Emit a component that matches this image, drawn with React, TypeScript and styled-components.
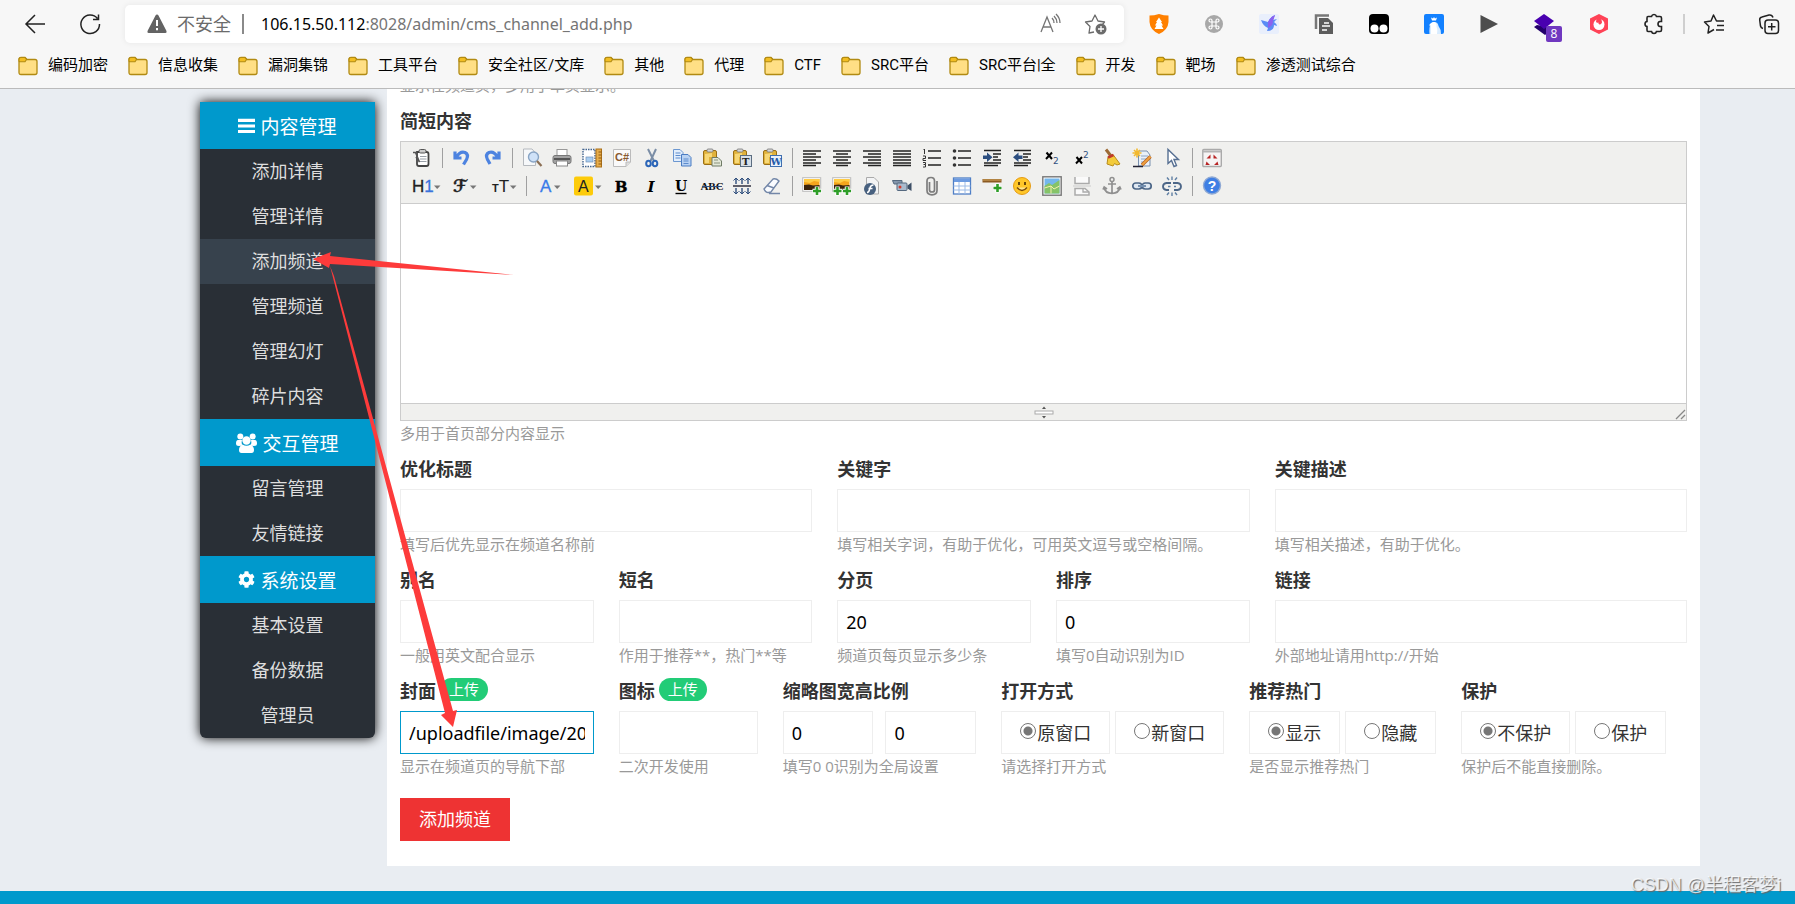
import React, { useId, useState } from 'react';
import styled, { createGlobalStyle, css } from 'styled-components';
import { FaCog } from 'react-icons/fa';

const BLUE = '#0099cc';
const SANS = '"Open Sans", "Noto Sans CJK SC", sans-serif';

const GlobalStyle = createGlobalStyle`
  *, *::before, *::after { box-sizing: border-box; }
  body {
    margin: 0;
    background: #e9edf2;
    color: #333;
    font-family: ${SANS};
    font-size: 18px;
  }
  button, input, textarea { font: inherit; }
`;

/* ---------- browser chrome ---------- */

const Page = styled.div`
  display: flex;
  flex-direction: column;
  min-height: 100vh;
  position: relative;
  overflow: hidden;
`;

const Chrome = styled.header`
  position: relative;
  z-index: 2;
  background: #f7f7f7;
  border-bottom: 1px solid #bbb;
`;

const NavBar = styled.div`
  display: flex;
  align-items: center;
  padding: 5px 16px 0 25px;
`;

const IconButton = styled.button<{ $size?: number }>`
  display: flex;
  align-items: center;
  justify-content: center;
  flex: none;
  position: relative;
  width: ${(p) => p.$size ?? 20}px;
  height: ${(p) => p.$size ?? 20}px;
  padding: 0;
  border: 0;
  background: none;
  color: inherit;
`;

const NavButtons = styled.div`
  display: flex;
  gap: 35px;
  margin-right: 25px;
  color: #222;
`;

const AddressBar = styled.div`
  flex: 1;
  display: flex;
  align-items: center;
  height: 38px;
  padding: 0 19px 0 22px;
  border-radius: 5px;
  background: #fff;
  box-shadow: 0 0 6px rgba(0, 0, 0, 0.07);
  color: #6b6b6b;
  white-space: nowrap;
`;

const Insecure = styled.span`
  margin: 0 11px 0 10px;
  font-size: 18px;
  line-height: 24px;
`;

const Divider = styled.span<{ $margin: string; $color: string }>`
  width: 2px;
  height: 20px;
  flex: none;
  margin: ${(p) => p.$margin};
  background: ${(p) => p.$color};
`;

const Url = styled.span`
  flex: 1;
  font-size: 17px;
  font-family: "Noto Sans", ${SANS};
  font-size: 16px;
  line-height: 24px;
  color: #757575;
  b { font-weight: 400; color: #000; }
`;

const AddressTools = styled.div`
  display: flex;
  gap: 25px;
`;

const Extensions = styled.div`
  display: flex;
  gap: 35px;
  margin-left: 25px;
`;

const BrowserTools = styled(Extensions)`
  margin-left: 0;
  color: #222;
`;

const Badge = styled.span`
  position: absolute;
  left: 12px;
  top: 12px;
  width: 16px;
  height: 16px;
  border-radius: 2px;
  background: #7038c0;
  color: #fff;
  font-size: 12px;
  line-height: 16px;
  text-align: center;
`;

const Bookmarks = styled.nav`
  display: flex;
  gap: 20px;
  padding: 10px 18px 10px;
`;

const Bookmark = styled.a`
  display: flex;
  align-items: center;
  gap: 10px;
  color: #000;
  font-family: Roboto, ${SANS};
  font-size: 15px;
  line-height: 25px;
  text-decoration: none;
  white-space: nowrap;
`;

/* ---------- admin page ---------- */

const Body = styled.div`
  display: flex;
  align-items: flex-start;
  gap: 12px;
  padding: 0 95px 25px 200px;
`;

const Sidebar = styled.nav`
  flex: none;
  width: 175px;
  margin-top: 13px;
  border-radius: 0 0 6px 6px;
  background: #292f36;
  box-shadow: 0 0 12px #000;
  overflow: hidden;
`;

const SidebarFrame = styled.div`
  flex: none;
`;

const GroupTitle = styled.h2`
  display: flex;
  align-items: center;
  justify-content: center;
  gap: 5px;
  height: 47px;
  margin: 0;
  background: ${BLUE};
  color: #fff;
  font-size: 19px;
  font-weight: 400;
`;

const MenuLink = styled.a<{ $active?: boolean }>`
  display: block;
  background: ${(p) => (p.$active ? '#37424d' : 'transparent')};
  color: #dedede;
  font-size: 18px;
  line-height: 45px;
  text-align: center;
  text-decoration: none;
`;

const Panel = styled.main`
  flex: 1;
  min-width: 0;
  margin-top: -16px;
  padding: 0 13px 25px;
  background: #fff;
`;

const Hint = styled.p`
  margin: 0 0 4px;
  color: #999;
  font-size: 15px;
  line-height: 24px;
  white-space: nowrap;
`;

const FieldHead = styled.div`
  display: flex;
  align-items: center;
  gap: 4px;
  height: 40px;
  padding-bottom: 3px;
  font-weight: 700;
  white-space: nowrap;
`;

const UploadButton = styled.button`
  padding: 0 9px;
  border: 0;
  border-radius: 12px;
  background: #22cc77;
  color: #fff;
  font-size: 15px;
  font-weight: 400;
  line-height: 23px;
`;

const TextInput = styled.input`
  display: block;
  width: 100%;
  min-width: 0;
  height: 43px;
  padding: 0 8px;
  border: 1px solid #eee;
  border-radius: 0;
  outline: 0;
  background: #fff;
  color: #000;
  font-family: "Noto Sans", ${SANS};
  font-size: 18px;
  &.current { border-color: ${BLUE}; }
`;

const SixGrid = styled.div`
  display: grid;
  grid-template-columns: repeat(6, 1fr);
  column-gap: 25px;
`;

const GridCell = styled.div<{ $span?: number }>`
  grid-column: span ${(p) => p.$span ?? 1};
  min-width: 0;
`;

const FlexRow = styled.div`
  display: flex;
  gap: 25px;
`;

const FlexCell = styled.div<{ $share?: number }>`
  flex: none;
  ${(p) => p.$share && css`width: calc((100% + 25px) / ${p.$share} - 25px);`}
`;

const Pair = styled.div<{ $gap: number }>`
  display: flex;
  gap: ${(p) => p.$gap}px;
`;

const RadioBox = styled.label`
  display: flex;
  align-items: center;
  gap: 1px;
  height: 43px;
  padding: 0 18px 2px;
  border: 1px solid #eee;
  white-space: nowrap;
  input {
    appearance: none;
    width: 16px;
    height: 16px;
    margin: 0 0 2px;
    border: 1px solid #767676;
    border-radius: 50%;
  }
  input:checked {
    background: radial-gradient(circle, #767676 0 4px, #fff 5px);
  }
`;

const SubmitButton = styled.button`
  margin-top: 16px;
  padding: 0 19px;
  border: 0;
  background: #ee3333;
  color: #fff;
  font-size: 18px;
  line-height: 43px;
`;

const Footer = styled.footer`
  flex: 1;
  background: ${BLUE};
`;

const Watermark = styled.div`
  position: absolute;
  right: 14px;
  bottom: 7px;
  color: rgba(255, 255, 255, 0.75);
  font-family: "Liberation Sans", "Noto Sans CJK SC", sans-serif;
  font-size: 18px;
  line-height: 24px;
  text-shadow: 1px 1px 1px #666;
`;

const Arrows = styled.svg`
  position: absolute;
  left: 0;
  top: 0;
  z-index: 3;
  pointer-events: none;
`;

/* ---------- rich text editor ---------- */

const Editor = styled.div`
  border: 1px solid #ccc;
`;

const Toolbar = styled.div`
  padding: 2px 6px 3px;
  border-bottom: 1px solid #ccc;
  background: #f0f0ee;
`;

const ToolRow = styled.div`
  display: flex;
  align-items: center;
  height: 28px;
`;

const Tool = styled.button<{ $wide?: boolean }>`
  display: flex;
  align-items: center;
  justify-content: center;
  flex: none;
  width: ${(p) => (p.$wide ? 38 : 30)}px;
  height: 28px;
  padding: 0;
  border: 0;
  background: none;
`;

const ToolDivider = styled.span`
  flex: none;
  width: 10px;
  height: 20px;
  background: linear-gradient(#a0a0a0, #a0a0a0) center / 1px 100% no-repeat;
`;

const Source = styled.textarea`
  display: block;
  width: 100%;
  height: 199px;
  border: 0;
  outline: 0;
  resize: none;
`;

const StatusBar = styled.div`
  display: flex;
  align-items: center;
  justify-content: center;
  position: relative;
  height: 17px;
  border-top: 1px solid #ccc;
  background: #f0f0ee;
`;

const Corner = styled.svg`
  position: absolute;
  right: 0;
  bottom: 0;
`;

/* ---------- drawings ---------- */

const Svg = ({ children, size = 20, box = 20 }: { children: React.ReactNode; size?: number; box?: number }) => (
  <svg width={size} height={size} viewBox={`0 0 ${box} ${box}`} fill="none" aria-hidden="true" overflow="visible">
    {children}
  </svg>
);

const Folder = () => (
  <Svg>
    <path d="M1 3.5Q1 1.5 3 1.5H7L9 3.5H17Q19 3.5 19 5.5V16.500Q19 18.500 17 18.500H3Q1 18.500 1 16.500Z" fill="#ffdf85" stroke="#b18a12" strokeWidth="1.300" />
    <path d="M1 5V3.500Q1 1.500 3 1.500H7L8.700 3.300L7 5.700H1.500Z" fill="#f2bd22" stroke="#b18a12" strokeWidth="1.100" />
  </Svg>
);

const ReadAloud = () => (
  <Svg>
    <path d="M1 18L7 3L13 18M3 13H11M12 4Q14 6 14 9M14 2Q17 5 17 9M16 0Q20 4 20 9" stroke="#757575" strokeWidth="1.300" />
  </Svg>
);

const StarPlus = () => (
  <Svg>
    <path d="M9 18L4 19L5 12.500L0.500 8L7 7L10 1L13 7L19.500 8L17.500 10.500" stroke="#6b6b6b" strokeWidth="1.300" strokeLinejoin="round" />
    <circle cx="16" cy="15" r="5.500" fill="#6b6b6b" />
    <path d="M13 15H19M16 12V18" stroke="#fff" strokeWidth="1.300" />
  </Svg>
);

const extensionIcons: { name: string; badge?: string; art: React.ReactNode }[] = [
  {
    name: '护盾',
    art: (
      <>
        <path d="M10 0Q15 1.500 19.500 1.500V8Q19 16 10 20Q1 16 0.500 8V1.500Q5 1.500 10 0Z" fill="#ff8000" />
        <path d="M10 3.500L13 8H12L14 11.500H12.500L14.500 15H5.500L7.500 11.500H6L8 8H7Z" fill="#fff" />
      </>
    ),
  },
  {
    name: '命令',
    art: (
      <>
        <circle cx="10" cy="10" r="9" fill="#a8a8a8" />
        <path d="M8 8H12V12H8ZM8 8H6.500A1.500 1.500 0 1 1 8 6.500ZM12 8V6.500A1.500 1.500 0 1 1 13.500 8ZM12 12H13.500A1.500 1.500 0 1 1 12 13.500ZM8 12V13.500A1.500 1.500 0 1 1 6.500 12Z" stroke="#fff" strokeWidth="1.200" />
      </>
    ),
  },
  {
    name: '飞鸟',
    art: (
      <>
        <rect x="0" y="0" width="20" height="20" rx="2" fill="#e9effc" />
        <path d="M2 6L9 8Q11 3 16 1L14 6L18 5L15 8Q18 10 18 12L15 11Q15 17 8 17L9 14Q4 12 2 6Z" fill="#5b8cf5" />
        <path d="M9 8Q11 3 16 1L14 7Q14 12 9 14Z" fill="#8a62f0" />
      </>
    ),
  },
  {
    name: '文档',
    art: (
      <>
        <path d="M2 15V1.500H15" stroke="#777" strokeWidth="2.500" />
        <path d="M5 4H14L19 9V20H5Z" fill="#5d5d5d" />
        <path d="M10 9H15M8 12H16M8 16H13" stroke="#fff" strokeWidth="1.500" />
      </>
    ),
  },
  {
    name: '脚本',
    art: (
      <>
        <rect width="20" height="20" rx="4" fill="#000" />
        <circle cx="5.500" cy="14.500" r="4" fill="#fff" />
        <circle cx="14.500" cy="14.500" r="4" fill="#fff" />
      </>
    ),
  },
  {
    name: '企鹅',
    art: (
      <>
        <rect width="20" height="20" rx="2" fill="#1381ff" />
        <path d="M5.500 20Q5 13 6.500 10.500Q8 7.500 11 8Q14 8.500 14.500 12Q17 15 17 20Z" fill="#d8ecff" />
        <path d="M5 11.500Q7 7.500 10.500 8Q13 9 12.500 12.500Q14 16 13 20H7Q7 14 7 11.500Z" fill="#fff" />
        <path d="M8 6.500L7 3.500L9 4.500L10 3L11 4.500L13 3.500L12 6.500Z" fill="#fff" />
      </>
    ),
  },
  { name: '播放', art: <path d="M1.500 1L19 10L1.500 19Z" fill="#4d4d4d" /> },
  {
    name: '图层',
    badge: '8',
    art: (
      <>
        <path d="M3 11L0 13L11 21L20 14Z" fill="#23006b" />
        <path d="M10 0L20 7L10 15L0 7Z" fill="#4900b0" />
      </>
    ),
  },
  {
    name: '火焰',
    art: (
      <>
        <path d="M10 0L19 4.500V15.500L10 20L1 15.500V4.500Z" fill="#ff4357" />
        <circle cx="10" cy="10.500" r="5.500" fill="#fff" />
        <path d="M9.500 3Q13 5 13 8.500Q12 11 10.500 10.500Q9 10 9.500 8.500Q7.500 9.500 7 7.500Q8 5 7.500 3Z" fill="#ff4357" />
      </>
    ),
  },
  {
    name: '扩展',
    art: (
      <path
        d="M4 2.500H7.500Q8 0.500 10 0.500Q12 0.500 12.500 2.500H16Q17.500 2.500 17.500 4V7.500H16Q14 7.800 14 10Q14 12.200 16 12.500H17.500V16Q17.500 17.500 16 17.500H12.500Q12 19.500 10 19.500Q8 19.500 7.500 17.500H4Q3 17.500 3 16V12.500Q1 12.200 1 10Q1 7.800 3 7.500V4Q3 2.500 4 2.500Z"
        stroke="#222"
        strokeWidth="1.600"
      />
    ),
  },
];

const serif = '"DejaVu Serif", serif';

type ToolDef = { name: string; wide?: boolean; art: React.ReactNode } | '|';

const lines = (rows: [number, number, number][], color = '#222', width = 1.6) => (
  <path d={rows.map(([x, y, w]) => `M${x} ${y}h${w}`).join('')} stroke={color} strokeWidth={width} />
);

const clipboardArt = (
  <>
    <rect x="1.500" y="2.500" width="13" height="14" rx="1.500" fill="#e0b23c" stroke="#9a6f14" />
    <rect x="5" y="1" width="6" height="3" rx="1" fill="#d8d8d8" stroke="#777" strokeWidth=".8" />
    <path d="M3 6L10 5V9H7V15H3Z" fill="#f7d877" />
  </>
);

const pictureArt = (
  <>
    <rect x="0.700" y="1.700" width="18" height="13.600" fill="#fff" stroke="#bbb" />
    <rect x="2" y="3" width="15.500" height="11" fill="#f4a51c" />
    <path d="M2 3H17.500V6L12 5L8 7L2 6Z" fill="#ffcc45" />
    <path d="M2 9L7 8.500L11 9.500L17.500 9V14H2Z" fill="#3b240c" />
  </>
);

const plus = (x: number, y: number) => (
  <>
    <path d={`M${x} ${y - 4.5}v9M${x - 4.5} ${y}h9`} stroke="#fff" strokeWidth="4.500" />
    <path d={`M${x} ${y - 4}v8M${x - 4} ${y}h8`} stroke="#2e9e28" strokeWidth="2.600" />
  </>
);

const chain = (
  <>
    <rect x="0.800" y="7" width="9" height="6" rx="3" stroke="#4c6687" strokeWidth="1.700" fill="#dfe8f2" />
    <rect x="10.200" y="7" width="9" height="6" rx="3" stroke="#4c6687" strokeWidth="1.700" fill="#dfe8f2" />
    <path d="M6 10H14" stroke="#7590b0" strokeWidth="2" />
  </>
);

const topTools: ToolDef[] = [
  {
    name: '源代码',
    art: (
      <>
        <path d="M5 4H14.500Q16.500 4 16.500 6V16Q16.500 18 14.500 18H7Q5 18 5 16Z" fill="#fff" stroke="#444" strokeWidth="1.800" />
        <rect x="7" y="1.500" width="7" height="3.500" rx="1.500" fill="#ccc" stroke="#555" />
        <path d="M8 8.500H14.500M8 11H14.500M8 13.500H14.500" stroke="#9aa0a8" />
        <path d="M1 4.500H3.500L7.500 14L4 9" stroke="#555" strokeWidth="1.500" />
      </>
    ),
  },
  '|',
  { name: '后退', art: <path d="M4.500 9Q8 3 13 4.500Q17 6.500 14.500 11.500L11.500 16.500M3 3.500V10H9.500" stroke="#4d83e0" strokeWidth="3.200" /> },
  { name: '前进', art: <path d="M15.500 9Q12 3 7 4.500Q3 6.500 5.500 11.500L8 16M17 3.500V10H10.500" stroke="#4d83e0" strokeWidth="3.200" /> },
  '|',
  {
    name: '预览',
    art: (
      <>
        <path d="M1.500 1H10L13.500 5V17.500H1.500Z" fill="#f6f8fa" stroke="#b5b9be" />
        <circle cx="11.500" cy="9" r="5" fill="#cfe2f8" stroke="#88a4c4" strokeWidth="1.400" />
        <path d="M15 13L19.500 18" stroke="#8b6f55" strokeWidth="2.200" />
      </>
    ),
  },
  {
    name: '打印',
    art: (
      <>
        <rect x="5" y="1.500" width="10" height="8" fill="#fff" stroke="#999" />
        <rect x="1" y="7.500" width="18" height="8" rx="2" fill="#a2a2a2" stroke="#777" />
        <rect x="2" y="10" width="16" height="2" fill="#555" />
        <rect x="4.500" y="13" width="11" height="5" fill="#fff" stroke="#888" />
      </>
    ),
  },
  {
    name: '模板',
    art: (
      <>
        <rect x="1" y="1.500" width="12" height="17" fill="#fff" stroke="#44658f" strokeWidth="1.400" strokeDasharray="1.500 1" />
        <rect x="4" y="9" width="7" height="5" fill="#a9cdf0" stroke="#7292b8" strokeWidth=".7" />
        <rect x="14" y="1" width="5.500" height="18" fill="#e7ad4a" stroke="#a96f18" />
        <path d="M16.500 4h3M16.500 7h3M16.500 10h3M16.500 13h3M16.500 16h3" stroke="#8d5812" />
      </>
    ),
  },
  {
    name: '代码',
    art: (
      <>
        <path d="M1.500 1.500H18.500V14L14 18.500H1.500Z" fill="#fafafa" stroke="#bbb" />
        <path d="M14 18.500V14H18.500" fill="#ddd" stroke="#bbb" />
        <text x="3" y="13" fontSize="11" fontWeight="700" fill="#8a5a30" fontFamily="Liberation Sans, sans-serif">C#</text>
      </>
    ),
  },
  {
    name: '剪切',
    art: (
      <>
        <path d="M6 1L12 13M14 1L8.500 13" stroke="#7b8ea6" strokeWidth="2" />
        <ellipse cx="6.500" cy="15.500" rx="2.300" ry="2.800" stroke="#2c66b8" strokeWidth="2" />
        <ellipse cx="13" cy="15.500" rx="2.300" ry="2.800" stroke="#2c66b8" strokeWidth="2" />
      </>
    ),
  },
  {
    name: '复制',
    art: (
      <>
        <path d="M1.500 1.500H8L11 4.500V13.500H1.500Z" fill="#e2eefc" stroke="#6c97d0" />
        <path d="M9.500 6.500H16L19 9.500V18H9.500Z" fill="#b8d2f3" stroke="#4a7cc2" />
        <path d="M3.500 5h5M3.500 7.500h5M3.500 10h5M11.500 11h5M11.500 13h5M11.500 15.500h5" stroke="#5c8bcc" />
      </>
    ),
  },
  {
    name: '粘贴',
    art: (
      <>
        {clipboardArt}
        <path d="M10 9.500H16L19.500 13V18H10Z" fill="#e3e8d8" stroke="#6f7b66" />
        <path d="M12 12h4M12 15h6" stroke="#8a927c" />
      </>
    ),
  },
  {
    name: '粘贴为无格式文本',
    art: (
      <>
        {clipboardArt}
        <rect x="8.500" y="7.500" width="11" height="11" fill="#d8e0e8" stroke="#5b6d80" />
        <text x="10" y="17" fontSize="10" fontWeight="700" fill="#222" fontFamily={serif}>T</text>
      </>
    ),
  },
  {
    name: '从Word粘贴',
    art: (
      <>
        {clipboardArt}
        <rect x="8.500" y="7.500" width="11" height="11" fill="#e9f1fb" stroke="#3f6fb0" />
        <text x="8.500" y="17" fontSize="10" fontWeight="700" fill="#255ba8" fontFamily={serif}>W</text>
      </>
    ),
  },
  '|',
  { name: '左对齐', art: lines([[1, 3, 18], [1, 6, 13], [1, 9, 18], [1, 12, 13], [1, 15, 18], [1, 17.5, 13]]) },
  { name: '居中', art: lines([[1, 3, 18], [4, 6, 12], [1, 9, 18], [4, 12, 12], [1, 15, 18], [4, 17.5, 12]]) },
  { name: '右对齐', art: lines([[1, 3, 18], [6, 6, 13], [1, 9, 18], [6, 12, 13], [1, 15, 18], [6, 17.5, 13]]) },
  { name: '两端对齐', art: lines([[1, 3, 18], [1, 6, 18], [1, 9, 18], [1, 12, 18], [1, 15, 18], [1, 17.5, 18]]) },
  {
    name: '编号',
    art: (
      <>
        {lines([[6, 3, 13], [6, 10, 13], [6, 17, 13]])}
        <path d="M2.500 1v5M1.500 1.500h1M1 8h2.500v2.500H1v2h3M1 14.500h2.500v2H1.500M3.500 16.500v2.500H1" stroke="#333" />
      </>
    ),
  },
  {
    name: '项目符号',
    art: (
      <>
        {lines([[6, 3, 13], [6, 10, 13], [6, 17, 13]])}
        <circle cx="2.500" cy="3" r="1.800" fill="#333" />
        <circle cx="2.500" cy="10" r="1.800" fill="#333" />
        <circle cx="2.500" cy="17" r="1.800" fill="#333" />
      </>
    ),
  },
  {
    name: '增加缩进',
    art: (
      <>
        {lines([[2, 2.5, 17], [11, 6, 8], [11, 9, 5], [11, 12, 8], [2, 15, 17], [2, 17.5, 14]])}
        <path d="M1 7.500H5V4.500L10.500 9.200L5 14V11H1Z" fill="#2d4f80" />
      </>
    ),
  },
  {
    name: '减少缩进',
    art: (
      <>
        {lines([[2, 2.5, 17], [11, 6, 8], [11, 9, 5], [11, 12, 8], [2, 15, 17], [2, 17.5, 14]])}
        <path d="M10.500 7.500H6.500V4.500L1 9.200L6.500 14V11H10.500Z" fill="#2d4f80" />
      </>
    ),
  },
  {
    name: '下标',
    art: (
      <>
        <path d="M4.500 4.500L10 11M10 4.500L4 11" stroke="#000" strokeWidth="2" />
        <text x="11" y="16" fontSize="9" fill="#31507e" fontFamily="DejaVu Sans, sans-serif">2</text>
      </>
    ),
  },
  {
    name: '上标',
    art: (
      <>
        <path d="M4.500 9L10 15.500M10 9L4 15.500" stroke="#000" strokeWidth="2" />
        <text x="11" y="10" fontSize="9" fill="#31507e" fontFamily="DejaVu Sans, sans-serif">2</text>
      </>
    ),
  },
  {
    name: '清理HTML代码',
    art: (
      <>
        <path d="M4 1.500L9 8" stroke="#9c6a35" strokeWidth="3" />
        <path d="M6 9L11 6.500L18 16L15 17L12.500 15.500L11 18L5 16Z" fill="#f3cb3a" stroke="#b88c1c" />
        <path d="M6 9.500L11.500 7" stroke="#c0392b" strokeWidth="2.500" />
      </>
    ),
  },
  {
    name: '一键排版',
    art: (
      <>
        <path d="M6.500 3H15L18 7V18H6.500Z" fill="#e9f0f8" stroke="#788fae" />
        <path d="M9 8h7M9 11h7M9 14h4" stroke="#8ca4c4" />
        <path d="M5 0.500V9.500M0.500 5H9.500M2 2L8 8M8 2L2 8" stroke="#f3b92e" strokeWidth="1.600" />
        <path d="M10 17L18.500 8.500" stroke="#b8641e" strokeWidth="3.400" />
        <path d="M10 17L18.500 8.500" stroke="#f0a040" strokeWidth="1.800" />
        <path d="M1 18.500H11" stroke="#223" strokeWidth="1.500" />
      </>
    ),
  },
  { name: '全选', art: <path d="M6 1.500V15.500L9.500 12.500L12 18.500L14.500 17.500L12 11.500H16.500Z" fill="#fff" stroke="#566f92" strokeWidth="1.400" /> },
  '|',
  {
    name: '全屏显示',
    art: (
      <>
        <rect x="0.800" y="1.500" width="18.500" height="17" rx="1" fill="#f6f4f4" stroke="#aaa" strokeWidth="1.400" />
        <path d="M1 3.500H19" stroke="#b4b4b4" strokeWidth="2" />
        <path d="M8.500 6.500V10.500H4.500ZM11.500 6.500V10.500H15.500ZM8 17L4.500 13.500L3.500 17ZM12 17L15.500 13.500L16.500 17Z" fill="#b82525" />
      </>
    ),
  },
];

const bottomTools: ToolDef[] = [
  {
    name: '段落',
    wide: true,
    art: (
      <>
        <text x="-4" y="16" fontSize="17" fill="#222" stroke="#222" strokeWidth=".3" fontFamily="Liberation Sans, sans-serif">H<tspan fill="#3a74dd" stroke="#3a74dd">1</tspan></text>
        <path d="M18 9.500H24.500L21.200 13Z" fill="#777" />
      </>
    ),
  },
  {
    name: '字体',
    wide: true,
    art: (
      <>
        <text x="-1" y="16" fontSize="17" fontWeight="700" fill="#222" stroke="#222" strokeWidth=".4" fontFamily="DejaVu Sans, sans-serif">ℱ</text>
        <path d="M16 9.500H22.500L19.200 13Z" fill="#777" />
      </>
    ),
  },
  {
    name: '文字大小',
    wide: true,
    art: (
      <>
        <text x="0" y="16" fontSize="11" fontWeight="700" fill="#222" fontFamily="Liberation Sans, sans-serif">T<tspan fontSize="17" fontWeight="400">T</tspan></text>
        <path d="M18 9.500H24.500L21.200 13Z" fill="#777" />
      </>
    ),
  },
  '|',
  {
    name: '文字颜色',
    wide: true,
    art: (
      <>
        <text x="0" y="16" fontSize="17" fill="#3a7be8" stroke="#3a7be8" strokeWidth=".3" fontFamily="Liberation Sans, sans-serif">A</text>
        <path d="M14 9.500H20.500L17.200 13Z" fill="#777" />
      </>
    ),
  },
  {
    name: '文字背景',
    wide: true,
    art: (
      <>
        <rect x="-4" y="0.500" width="19" height="19" rx="2" fill="#fdcb0a" />
        <text x="0" y="16" fontSize="16" fill="#222" fontFamily="Liberation Sans, sans-serif">A</text>
        <path d="M17 9.500H23.500L20.200 13Z" fill="#777" />
      </>
    ),
  },
  { name: '粗体', art: <text x="9" y="15.500" textAnchor="middle" fontSize="15" fontWeight="700" fill="#000" stroke="#000" strokeWidth=".4" fontFamily={serif}>B</text> },
  { name: '斜体', art: <text x="9" y="15.500" textAnchor="middle" fontSize="15" fontWeight="700" fontStyle="italic" fill="#000" fontFamily={serif}>I</text> },
  {
    name: '下划线',
    art: (
      <>
        <text x="9" y="15" textAnchor="middle" fontSize="14" fontWeight="700" fill="#000" fontFamily={serif}>U</text>
        <path d="M3.500 17.500H14.500" stroke="#000" strokeWidth="1.400" />
      </>
    ),
  },
  {
    name: '删除线',
    art: (
      <>
        <text x="10" y="14" textAnchor="middle" fontSize="11" fontWeight="700" fill="#111" fontFamily="Liberation Serif, serif">ABC</text>
        <path d="M0 10.500H20" stroke="#31507e" />
      </>
    ),
  },
  {
    name: '行距',
    art: (
      <>
        <path d="M1 10H19" stroke="#223" strokeWidth="1.400" />
        <path d="M4 2v6M10 2v6M16 2v6M4 12v6M10 12v6M16 12v6" stroke="#31507e" strokeWidth="1.400" />
        <path d="M1.500 4.500L4 2L6.500 4.500M7.500 4.500L10 2L12.500 4.500M13.500 4.500L16 2L18.500 4.500M1.500 15.500L4 18L6.500 15.500M7.500 15.500L10 18L12.500 15.500M13.500 15.500L16 18L18.500 15.500" stroke="#31507e" />
      </>
    ),
  },
  {
    name: '删除格式',
    art: (
      <>
        <path d="M2 13L11 3Q14 2 17 5L9 16Q4 18 2 13Z" fill="#fafcff" stroke="#7387a8" strokeWidth="1.400" />
        <path d="M5 9.500L12 12M7 17.500H18" stroke="#7387a8" strokeWidth="1.400" />
      </>
    ),
  },
  '|',
  { name: '图片', art: <>{pictureArt}{plus(15, 15)}</> },
  { name: '批量图片上传', art: <>{pictureArt}{plus(5.5, 15)}{plus(15, 15)}</> },
  {
    name: 'Flash',
    art: (
      <>
        <path d="M4.500 1.500H12L16.500 6V18H4.500Z" fill="#f3f4f5" stroke="#aaa" />
        <circle cx="8" cy="13" r="6" fill="#48617f" />
        <path d="M11.500 9Q8.500 9 7.800 12.500Q7 16.500 5 16.500M6.500 12.500H10.500" stroke="#fff" strokeWidth="1.500" />
      </>
    ),
  },
  {
    name: '视音频',
    art: (
      <>
        <path d="M0.500 4.500H10V8H2Z" fill="#8496ab" stroke="#55697f" />
        <rect x="5" y="7" width="10" height="7.500" rx="1" fill="#a9bacd" stroke="#55697f" />
        <circle cx="8" cy="11" r="1.500" fill="#d33a2c" />
        <path d="M15.500 9.500L19.500 6.500V15L15.500 12.500Z" fill="#3d4f66" />
      </>
    ),
  },
  { name: '插入文件', art: <path d="M7.500 6V14Q7.500 16 10 16Q12.500 16 12.500 14V5Q12.500 1.500 9 1.500Q5 1.500 5 5V14.500Q5 18.800 10 18.800Q15 18.800 15 14.500V5" stroke="#7d7d7d" strokeWidth="1.700" /> },
  {
    name: '表格',
    art: (
      <>
        <rect x="1.500" y="2" width="17" height="16" fill="#fff" stroke="#4f7fc6" strokeWidth="1.300" />
        <rect x="2" y="2.500" width="16" height="3.500" fill="#6d9be0" />
        <path d="M1.500 10h17M1.500 14h17M7 6v12M13 6v12" stroke="#9cbbe6" />
      </>
    ),
  },
  { name: '插入横线', art: <><rect x="0.500" y="3" width="19" height="3.500" fill="#8b5a22" /><path d="M1 4h18" stroke="#d9ac62" />{plus(15.5, 12)}</> },
  {
    name: '插入表情',
    art: (
      <>
        <circle cx="10" cy="10" r="8.500" fill="#ffc729" stroke="#e69b13" />
        <path d="M7 6v3M13 6v3" stroke="#5a3a08" strokeWidth="1.800" />
        <path d="M5 11.500Q10 17.500 15 11.500" stroke="#7a4a08" strokeWidth="1.300" fill="#ffe68f" />
      </>
    ),
  },
  {
    name: '地图',
    art: (
      <>
        <rect x="0.800" y="0.800" width="18.400" height="18.400" fill="#fff" stroke="#777" strokeWidth="1.400" />
        <rect x="2.500" y="2.500" width="15" height="15" fill="#74b7ec" />
        <path d="M2.500 10L7 7L10 9L17.500 4V17.500H2.500Z" fill="#86c368" />
        <path d="M2.500 12L9 10L12 13L17.500 10M9 10V17.500" stroke="#f6f0a8" />
      </>
    ),
  },
  {
    name: '插入分页符',
    art: (
      <>
        <path d="M3 1V7.500H17V1" fill="#fafafa" stroke="#aaa" strokeWidth="1.500" />
        <path d="M1 10H19" stroke="#ccc" />
        <path d="M3 19V12.500H13L17 16V19Z" fill="#fafafa" stroke="#aaa" strokeWidth="1.500" />
        <path d="M11 12.500V16H17" stroke="#aaa" strokeWidth="1.300" />
      </>
    ),
  },
  {
    name: '锚点',
    art: (
      <>
        <circle cx="10" cy="3.500" r="2" stroke="#909090" strokeWidth="1.500" />
        <path d="M10 5.500V17.500M6 8H14M2 11.500Q3 17 10 17.500Q17 17 18 11.500M1 13.500L2.200 11L5 13M15 13L17.800 11L19 13.500" stroke="#909090" strokeWidth="1.700" />
      </>
    ),
  },
  { name: '超级链接', art: chain },
  {
    name: '取消超级链接',
    art: (
      <>
        <path d="M9 7H4.500Q1 7.500 1 10.500Q1 13.500 4.500 14H7M11 7H15.500Q19 7.500 19 10.500Q19 13.500 15.500 14H12" stroke="#4c6687" strokeWidth="1.800" />
        <path d="M6 10.500h2.500M12 10.500h2M7 4L5 1.500M10 4V0.500M13 4L15 1.500M7 16.500L5 19M10 16.500V20M13 16.500L15 19" stroke="#5f7fa3" strokeWidth="1.400" />
      </>
    ),
  },
  '|',
  {
    name: '关于',
    art: (
      <>
        <circle cx="10" cy="9.500" r="8.500" fill="#3f7fe4" stroke="#8fa9d4" strokeWidth="1.400" />
        <text x="10" y="14.500" textAnchor="middle" fontSize="14" fontWeight="700" fill="#fff" fontFamily="Liberation Sans, sans-serif">?</text>
      </>
    ),
  },
];

const Tools = ({ items }: { items: ToolDef[] }) => (
  <ToolRow>
    {items.map((item, i) =>
      item === '|' ? (
        <ToolDivider key={i} />
      ) : (
        <Tool key={i} type="button" $wide={item.wide} aria-label={item.name}>
          <Svg>{item.art}</Svg>
        </Tool>
      ),
    )}
  </ToolRow>
);

const MenuBars = () => (
  <Svg size={17}>
    <path d="M0 4H20M0 10.500H20M0 17H20" stroke="#fff" strokeWidth="3.600" />
  </Svg>
);

const People = () => (
  <svg width="21" height="20" viewBox="0 0 21 20" fill="#fff" aria-hidden="true">
    <circle cx="4.300" cy="3.500" r="3" />
    <circle cx="16.700" cy="3.500" r="3" />
    <path d="M2 7H6Q5 12 7 12.500L3 13Q0 13 0 10.500Q0 7 2 7ZM19 7H15Q16 12 14 12.500L18 13Q21 13 21 10.500Q21 7 19 7Z" />
    <circle cx="10.500" cy="7.500" r="4.200" />
    <path d="M6.500 11.500Q10.500 14 14.500 11.500Q18 13 18 17Q18 20 15.500 20H5.500Q3 20 3 17Q3 13 6.500 11.500Z" />
  </svg>
);

/* ---------- data ---------- */

const bookmarks = ['编码加密', '信息收集', '漏洞集锦', '工具平台', '安全社区/文库', '其他', '代理', 'CTF', 'SRC平台', 'SRC平台|全', '开发', '靶场', '渗透测试综合'];

const menu = [
  { title: '内容管理', icon: <MenuBars />, items: ['添加详情', '管理详情', '添加频道', '管理频道', '管理幻灯', '碎片内容'] },
  { title: '交互管理', icon: <People />, items: ['留言管理', '友情链接'] },
  { title: '系统设置', icon: <FaCog size={17} />, items: ['基本设置', '备份数据', '管理员'] },
];

type FieldProps = { label: string; hint: string; value?: string; upload?: boolean; current?: boolean };

const Field = ({ label, hint, value = '', upload, current }: FieldProps) => {
  const id = useId();
  return (
    <>
      <FieldHead>
        <label htmlFor={id}>{label}</label>
        {upload && <UploadButton type="button">上传</UploadButton>}
      </FieldHead>
      <TextInput id={id} type="text" defaultValue={value} className={current ? 'current' : undefined} />
      <Hint>{hint}</Hint>
    </>
  );
};

const RadioField = ({ label, hint, options }: { label: string; hint: string; options: string[] }) => {
  const name = useId();
  const [chosen, setChosen] = useState(options[0]);
  return (
    <FlexCell role="radiogroup" aria-label={label}>
      <FieldHead>{label}</FieldHead>
      <Pair $gap={5}>
        {options.map((option) => (
          <RadioBox key={option}>
            <input type="radio" name={name} checked={chosen === option} onChange={() => setChosen(option)} />
            {option}
          </RadioBox>
        ))}
      </Pair>
      <Hint>{hint}</Hint>
    </FlexCell>
  );
};

export default function App() {
  return (
    <Page>
      <GlobalStyle />
      <Chrome>
        <NavBar>
          <NavButtons>
            <IconButton aria-label="返回">
              <Svg><path d="M20 10H1M10 1L1 10L10 19" stroke="currentColor" strokeWidth="1.500" /></Svg>
            </IconButton>
            <IconButton aria-label="刷新">
              <Svg><path d="M17.500 4.500A9.300 9.300 0 1 0 19.500 10M18.500 0.500V5.500H13" stroke="currentColor" strokeWidth="1.500" /></Svg>
            </IconButton>
          </NavButtons>
          <AddressBar>
            <Svg>
              <path d="M10 0.500Q11 0.500 11.500 1.500L19.500 17Q20 19 18.500 19H1.500Q0 19 0.500 17L8.500 1.500Q9 0.500 10 0.500Z" fill="#636363" />
              <path d="M10 6V12M10 14V16.200" stroke="#fff" strokeWidth="2" />
            </Svg>
            <Insecure>不安全</Insecure>
            <Divider $margin="0 17px 0 0" $color="#8a8a8a" />
            <Url><b>106.15.50.112</b>:8028/admin/cms_channel_add.php</Url>
            <AddressTools>
              <IconButton aria-label="大声朗读"><ReadAloud /></IconButton>
              <IconButton aria-label="添加到收藏夹"><StarPlus /></IconButton>
            </AddressTools>
          </AddressBar>
          <Extensions>
            {extensionIcons.map((ext) => (
              <IconButton key={ext.name} aria-label={ext.name}>
                <Svg>{ext.art}</Svg>
                {ext.badge && <Badge>{ext.badge}</Badge>}
              </IconButton>
            ))}
          </Extensions>
          <Divider $margin="0 19px" $color="#cfcfcf" />
          <BrowserTools>
            <IconButton aria-label="收藏夹">
              <Svg><path d="M10 15.500L4 19L5 12.500L0.500 8L7 7L9.500 1L12.500 7H20M13 11.500H20M12 16H20" stroke="currentColor" strokeWidth="1.500" strokeLinejoin="round" /></Svg>
            </IconButton>
            <IconButton aria-label="集锦">
              <Svg>
                <rect x="6" y="6" width="13.500" height="13.500" rx="3" stroke="currentColor" strokeWidth="1.500" />
                <path d="M12.700 9V16.500M9 12.700H16.500M4 14.500Q2 14 1.500 12L0.700 6Q0.500 3.500 3 3L10 1Q13 0.500 14 3.500" stroke="currentColor" strokeWidth="1.500" />
              </Svg>
            </IconButton>
          </BrowserTools>
        </NavBar>
        <Bookmarks>
          {bookmarks.map((name) => (
            <Bookmark key={name} href="#">
              <Folder />
              {name}
            </Bookmark>
          ))}
        </Bookmarks>
      </Chrome>

      <Body>
        <Sidebar>
          {menu.map((group) => (
            <SidebarFrame key={group.title}>
              <GroupTitle>
                {group.icon}
                {group.title}
              </GroupTitle>
              {group.items.map((item) => (
                <MenuLink key={item} href="#" $active={item === '添加频道'}>
                  {item}
                </MenuLink>
              ))}
            </SidebarFrame>
          ))}
        </Sidebar>

        <Panel>
          <Hint>显示在频道页，多用于单页显示。</Hint>
          <FieldHead>
            <label htmlFor="summary">简短内容</label>
          </FieldHead>
          <Editor>
            <Toolbar>
              <Tools items={topTools} />
              <Tools items={bottomTools} />
            </Toolbar>
            <Source id="summary" />
            <StatusBar>
              <svg width="20" height="13" viewBox="0 0 20 13" aria-hidden="true">
                <rect x="1" y="5" width="18" height="3" fill="#fff" stroke="#aaa" />
                <path d="M8 3L10 0.500L12 3ZM8 10L10 12.500L12 10Z" fill="#555" />
              </svg>
              <Corner width="12" height="12" viewBox="0 0 12 12" aria-hidden="true">
                <path d="M2 11L11 2M7 11L11 7" stroke="#888" strokeWidth="1.300" />
              </Corner>
            </StatusBar>
          </Editor>
          <Hint>多用于首页部分内容显示</Hint>

          <SixGrid>
            <GridCell $span={2}><Field label="优化标题" hint="填写后优先显示在频道名称前" /></GridCell>
            <GridCell $span={2}><Field label="关键字" hint="填写相关字词，有助于优化，可用英文逗号或空格间隔。" /></GridCell>
            <GridCell $span={2}><Field label="关键描述" hint="填写相关描述，有助于优化。" /></GridCell>
            <GridCell><Field label="别名" hint="一般用英文配合显示" /></GridCell>
            <GridCell><Field label="短名" hint="作用于推荐**，热门**等" /></GridCell>
            <GridCell><Field label="分页" value="20" hint="频道页每页显示多少条" /></GridCell>
            <GridCell><Field label="排序" value="0" hint="填写0自动识别为ID" /></GridCell>
            <GridCell $span={2}><Field label="链接" hint="外部地址请用http://开始" /></GridCell>
          </SixGrid>

          <FlexRow>
            <FlexCell $share={6}>
              <Field label="封面" value="/uploadfile/image/20220810/1.png" hint="显示在频道页的导航下部" upload current />
            </FlexCell>
            <FlexCell $share={8}>
              <Field label="图标" hint="二次开发使用" upload />
            </FlexCell>
            <FlexCell $share={6}>
              <FieldHead><label htmlFor="ratio-w">缩略图宽高比例</label></FieldHead>
              <Pair $gap={12}>
                <TextInput id="ratio-w" type="text" defaultValue="0" />
                <TextInput type="text" defaultValue="0" aria-label="缩略图高" />
              </Pair>
              <Hint>填写0 0识别为全局设置</Hint>
            </FlexCell>
            <RadioField label="打开方式" hint="请选择打开方式" options={['原窗口', '新窗口']} />
            <RadioField label="推荐热门" hint="是否显示推荐热门" options={['显示', '隐藏']} />
            <RadioField label="保护" hint="保护后不能直接删除。" options={['不保护', '保护']} />
          </FlexRow>

          <SubmitButton type="button">添加频道</SubmitButton>
        </Panel>
      </Body>

      <Footer />
      <Watermark>CSDN @半程客梦i</Watermark>

      <Arrows width="520" height="740" viewBox="0 0 520 740" fill="#fd3b3b" aria-hidden="true">
        <path d="M313 259L331 252L330 256L514 275L330 264L329 268Z" />
        <path d="M330 266L334 276L453 711L457 710L453 727L441 715L445 713Z" />
      </Arrows>
    </Page>
  );
}
